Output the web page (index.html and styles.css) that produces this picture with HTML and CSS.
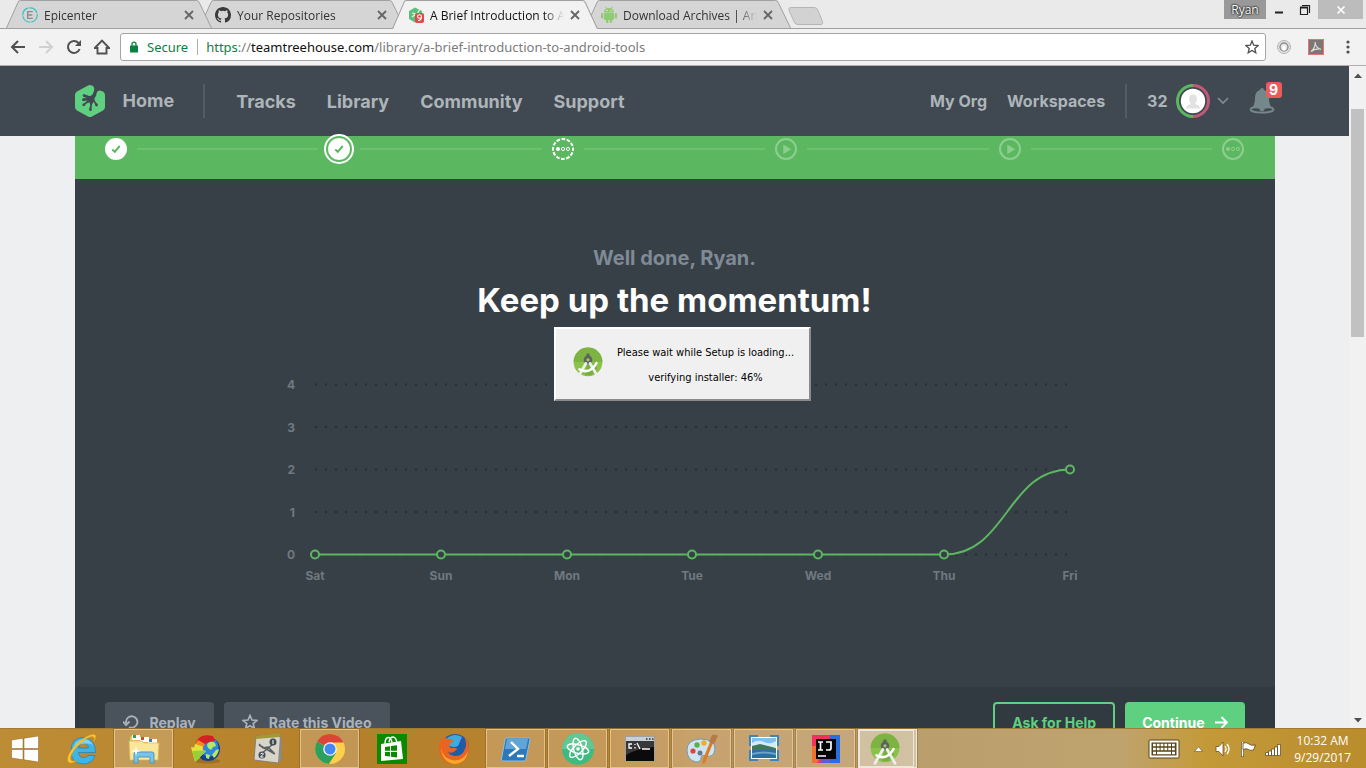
FILE: index.html
```html
<!DOCTYPE html>
<html lang="en">
<head>
<meta charset="utf-8">
<title>A Brief Introduction to Android Tools</title>
<link rel="stylesheet" href="styles.css">
</head>
<body>
<svg class="defs" aria-hidden="true">
  <symbol id="tabshape" viewBox="0 0 207 28" preserveAspectRatio="none">
    <path d="M0.500 28 L12 2.500 Q12.700 .5 14.500 .5 H191.500 Q193.300 .5 194.200 2.500 L206.500 28" stroke="#a0a0a0"/>
  </symbol>
  <symbol id="close" viewBox="0 0 10 10"><path d="M1 1 L9 9 M9 1 L1 9" fill="none" stroke="currentColor" stroke-width="1.800"/></symbol>
  <symbol id="studio" viewBox="0 0 30 30">
    <circle cx="15" cy="14" r="13.500" fill="#8bc34a"/>
    <path d="M1.500 14a13.500 13.500 0 0 1 27 0z" fill="#7cb342"/>
    <path d="M15 11 L24 20 L18 26.500 H12z" fill="#558b2f" opacity=".35"/>
    <rect x="13.500" y="6" width="3" height="5" rx="1" fill="#616161"/>
    <circle cx="15" cy="12" r="4" fill="#616161"/><circle cx="15" cy="12" r="1.500" fill="#9ccc65"/>
    <path d="M13 15.500 L5.500 28.500 M17 15.500 L24.500 28.500" stroke="#eee" stroke-width="2.600" stroke-linecap="round"/>
    <path d="M7 21 Q17 26 23 15" fill="none" stroke="#fff" stroke-width="2.400" stroke-linecap="round"/>
  </symbol>
</svg>

<header class="chrome">
  <div class="tabstrip">
    <div class="tabs">
      <div class="tab tab-first">
        <svg class="tab-bg"><use href="#tabshape"/></svg>
        <svg class="favicon" viewBox="0 0 16 16"><circle cx="8" cy="8" r="7.200" fill="none" stroke="#3fc1c9" stroke-width="1.300" stroke-dasharray="10 1"/><path d="M10.800 4.600H5.700v6.800h5.100M5.700 8h4.600" fill="none" stroke="#8c8c8c" stroke-width="1.400"/></svg>
        <span class="tab-title">Epicenter</span>
        <button class="tab-close" aria-label="Close tab"><svg viewBox="0 0 10 10"><use href="#close"/></svg></button>
      </div>
      <div class="tab tab-second">
        <svg class="tab-bg"><use href="#tabshape"/></svg>
        <svg class="favicon" viewBox="0 0 16 16"><path fill="#3a3a3a" fill-rule="evenodd" d="M8 0C3.580 0 0 3.580 0 8c0 3.540 2.290 6.530 5.470 7.590.4.070.55-.17.55-.38 0-.19-.01-.82-.01-1.490-2.010.37-2.530-.49-2.690-.94-.09-.23-.48-.94-.82-1.130-.28-.15-.68-.52-.01-.53.63-.01 1.080.58 1.230.82.72 1.210 1.870.87 2.330.66.07-.52.28-.87.51-1.070-1.780-.2-3.640-.89-3.640-3.950 0-.87.31-1.590.82-2.150-.08-.2-.36-1.020.08-2.120 0 0 .67-.21 2.200.82a7.600 7.600 0 0 1 4 0c1.530-1.040 2.200-.82 2.200-.82.44 1.100.16 1.920.08 2.120.51.56.82 1.270.82 2.150 0 3.070-1.870 3.750-3.650 3.950.29.25.54.73.54 1.480 0 1.070-.01 1.930-.01 2.200 0 .21.15.46.55.38A8 8 0 0 0 16 8c0-4.420-3.580-8-8-8z"/></svg>
        <span class="tab-title">Your Repositories</span>
        <button class="tab-close" aria-label="Close tab"><svg viewBox="0 0 10 10"><use href="#close"/></svg></button>
      </div>
      <div class="tab tab-active">
        <svg class="tab-bg"><use href="#tabshape"/></svg>
        <svg class="favicon" viewBox="0 0 16 16"><path d="M7 .5 L14 4 V12 L7 15.500 L1 12 V4z" fill="#57c17b"/><path d="M4 6l5 1 3-5M4 10l4-3" stroke="#f2f2f2" stroke-width="1.200" fill="none"/><rect x="7" y="6" width="9" height="10" rx="2" fill="#e0484a"/><path d="M13.500 9.500a2 1.800 0 1 0-4 0 2 1.800 0 1 0 4 0q0 4-3.500 4" fill="none" stroke="#fff" stroke-width="1.100"/></svg>
        <span class="tab-title">A Brief Introduction to Android Tools</span>
        <button class="tab-close" aria-label="Close tab"><svg viewBox="0 0 10 10"><use href="#close"/></svg></button>
      </div>
      <div class="tab tab-last">
        <svg class="tab-bg"><use href="#tabshape"/></svg>
        <svg class="favicon" viewBox="0 0 16 16"><g fill="#8fcb72"><path d="M3 5.500a5 4.500 0 0 1 10 0z"/><rect x="3" y="6" width="10" height="7" rx="1"/><rect x="0" y="6" width="2.300" height="5.500" rx="1.100"/><rect x="13.700" y="6" width="2.300" height="5.500" rx="1.100"/><rect x="5" y="12" width="2.300" height="4" rx="1"/><rect x="8.700" y="12" width="2.300" height="4" rx="1"/></g><path d="M4.500 0l1.500 2M11.500 0L10 2" stroke="#8fcb72"/><path d="M5.500 3.500h1M9.500 3.500h1" stroke="#fff"/></svg>
        <span class="tab-title">Download Archives | Android Studio</span>
        <button class="tab-close" aria-label="Close tab"><svg viewBox="0 0 10 10"><use href="#close"/></svg></button>
      </div>
      <button class="new-tab" aria-label="New tab"><svg viewBox="0 0 36 18"><path d="M3 .5H26Q28.500 .5 29.500 2.500L34.500 14.500Q35.500 17.500 33 17.500H10Q7.500 17.500 6.500 15.500L1 3.500Q0 .5 3 .5z" fill="#d2d2d2" stroke="#b5b5b5"/></svg></button>
    </div>
    <div class="window-controls">
      <button class="profile">Ryan</button>
      <button class="win-button" aria-label="Minimize"><svg viewBox="0 0 12 12"><path d="M2 8.500h8" stroke="#222" stroke-width="2"/></svg></button>
      <button class="win-button" aria-label="Restore"><svg viewBox="0 0 12 12"><path d="M1 3.500h7.500v7H1.500v-7M3 1.500h7.500V9" fill="none" stroke="#222" stroke-width="1.200"/><path d="M1 3.500h8" stroke="#222" stroke-width="2"/></svg></button>
      <button class="win-button win-close" aria-label="Close"><svg viewBox="0 0 12 12"><path d="M2.500 2.500l7 7M9.500 2.500l-7 7" stroke="#fff" stroke-width="1.700"/></svg></button>
    </div>
  </div>
  <div class="toolbar">
    <button class="tool" aria-label="Back"><svg viewBox="0 0 16 16"><path d="M15 8H2.500M8 2L2 8l6 6" fill="none" stroke="#505050" stroke-width="2"/></svg></button>
    <button class="tool" aria-label="Forward"><svg viewBox="0 0 16 16"><path d="M1 8h12.500M8 2l6 6-6 6" fill="none" stroke="#d0d0d0" stroke-width="2"/></svg></button>
    <button class="tool" aria-label="Reload"><svg viewBox="0 0 16 16"><path d="M13.600 10A6 6 0 1 1 12.500 4" fill="none" stroke="#505050" stroke-width="2"/><path d="M15 1v6H9z" fill="#505050"/></svg></button>
    <button class="tool" aria-label="Home"><svg viewBox="0 0 16 16"><path d="M.8 9L8 1.500 15.200 9H12.500V14.500H3.500V9z" fill="none" stroke="#505050" stroke-width="1.900"/></svg></button>
    <div class="omnibox">
      <svg class="lock" viewBox="0 0 8 12"><rect y="4.500" width="8" height="7" rx=".6" fill="#0b8043"/><path d="M2 5V3.200a2 2 0 0 1 4 0V5" fill="none" stroke="#0b8043" stroke-width="1.300"/></svg>
      <span class="secure">Secure</span>
      <div class="url" contenteditable="true" role="textbox" aria-label="Address"><span class="scheme">https</span>://<span class="host">teamtreehouse.com</span>/library/a-brief-introduction-to-android-tools</div>
      <button class="bookmark" aria-label="Bookmark"><svg viewBox="0 0 14 14"><path d="M7 1l1.700 4.200 4.500.3-3.400 2.900 1 4.400L7 10.400l-3.800 2.400 1-4.400L.8 5.500l4.500-.3z" fill="none" stroke="#505050" stroke-width="1.300"/></svg></button>
    </div>
    <button class="extension" aria-label="Extension"><svg viewBox="0 0 16 16"><circle cx="8" cy="8" r="6.500" fill="#e6e6e6" stroke="#b3b3b3"/><circle cx="8" cy="8" r="4" fill="none" stroke="#8f8f8f" stroke-width="1.500"/><path d="M6.500 8a1.500 1.500 0 0 1 3 0v3.500h-3z" fill="#fff"/></svg></button>
    <button class="extension" aria-label="Adobe Acrobat"><svg viewBox="0 0 16 16"><rect x=".5" y=".5" width="15" height="15" fill="#7d7676" stroke="#e5756c"/><path d="M3 12.500Q7.500 9 7.200 3M7.200 4Q8 9 13 10.500M3 12.500Q7 9 13 10" fill="none" stroke="#ddd" stroke-width="1.200"/></svg></button>
    <button class="menu" aria-label="Menu"><svg viewBox="0 0 4 14"><circle cx="2" cy="2" r="1.600"/><circle cx="2" cy="7" r="1.600"/><circle cx="2" cy="12" r="1.600"/></svg></button>
  </div>
</header>

<div class="viewport">
  <div class="page">
    <nav class="sitenav">
      <div class="sitenav-inner">
        <a class="logo" href="#" aria-label="Treehouse"><svg viewBox="0 0 30 32"><path d="M13 .6Q15 -.5 17 .6L18.500 1.500Q19.800 3.500 18.800 6.500L17.500 9.500Q16 11.500 13.500 10.800L9.500 9.300Q7.500 9 7.700 10.500 8 12 9.500 12.300L12 13 8.500 13.200Q6.700 13.500 7 15 7.500 16.500 9 16L12.500 15.500 9.500 18Q7 18.500 7.300 20.300 8.300 22 9.800 20.800L11 18.800 14.500 17.200 15.300 20.500Q14.500 23.500 14 24 14.200 26.500 15.800 26 17.400 25.500 16.500 23.500L17 19.500 18.500 16.800 20 19Q20 21.500 21.500 21.500 23.600 21 22.700 19.300L20.500 17 19.500 14.500Q19.500 12.500 21.300 10.500 21 8 22.500 6.500 24 4.800 26.500 6L28 6.600Q30 7.800 30 10V22Q30 24.300 28 25.400L17 31.400Q15 32.500 13 31.400L2 25.400Q0 24.300 0 22V10Q0 7.800 2 6.600z" fill="#5fcf80"/></svg></a>
        <a class="primary home" href="#">Home</a>
        <a class="primary" href="#">Tracks</a>
        <a class="primary" href="#">Library</a>
        <a class="primary" href="#">Community</a>
        <a class="primary" href="#">Support</a>
        <div class="account">
          <a class="secondary" href="#">My Org</a>
          <a class="secondary" href="#">Workspaces</a>
          <a class="points" href="#">32</a>
          <button class="avatar" aria-label="Profile menu"><svg class="ring" viewBox="0 0 34 34"><path d="M17 1.500a15.500 15.500 0 0 0 0 31" fill="none" stroke="#5cb860" stroke-width="3"/><path d="M17 1.500a15.500 15.500 0 0 1 0 31" fill="none" stroke="#c25975" stroke-width="3"/><circle cx="17" cy="17" r="12.200" fill="#fff"/><path d="M10 24.500q0-3.500 5-4.500-2-2-2-5.500 0-4 4-4t4 4q0 3.500-2 5.500 5 1 5 4.500z" fill="#e2e2e2"/></svg><svg class="chevron" viewBox="0 0 12 8"><path d="M1 1l5 5 5-5" fill="none" stroke="#7f8c95" stroke-width="1.700"/></svg></button>
          <button class="bell" aria-label="Notifications"><svg viewBox="0 0 26 26"><path d="M13 0q1.800 0 2 2 5 1.500 5 8 0 7 3 10H3q3-3 3-10 0-6.500 5-8 .2-2 2-2z" fill="#75878a"/><ellipse cx="13" cy="21.500" rx="11.500" ry="3" fill="#404851" stroke="#75878a" stroke-width="1.800"/><path d="M6 15h14l2 5q-9 1.500-18 0z" fill="#75878a"/><circle cx="13" cy="20.500" r="2.600" fill="#75878a"/></svg><span class="badge">9</span></button>
        </div>
      </div>
    </nav>

    <main class="stage">
      <div class="steps">
        <svg class="step" viewBox="0 0 22 22"><circle cx="11" cy="11" r="11" fill="#fff"/><path d="M7.300 11.500l2.500 2.300L14.700 8" fill="none" stroke="#5cb860" stroke-width="2"/></svg>
        <span class="link"></span>
        <svg class="step step-current" viewBox="0 0 22 22"><circle cx="11" cy="11" r="11" fill="#fff"/><path d="M7.300 11.500l2.500 2.300L14.700 8" fill="none" stroke="#5cb860" stroke-width="2"/></svg>
        <span class="link"></span>
        <svg class="step" viewBox="0 0 22 22"><circle cx="11" cy="11" r="10" fill="none" stroke="#fff" stroke-width="2" stroke-dasharray="3.700 1.536" stroke-dashoffset="1.850"/><circle cx="6" cy="11" r="2" fill="#fff"/><g fill="none" stroke="#fff"><circle cx="11" cy="11" r="1.600"/><circle cx="16" cy="11" r="1.600"/></g></svg>
        <span class="link"></span>
        <svg class="step step-future" viewBox="0 0 22 22"><circle cx="11" cy="11" r="10" fill="none" stroke="#fff" stroke-width="2"/><path d="M8.300 6.500v9.500l8-4.700z" fill="#fff"/></svg>
        <span class="link"></span>
        <svg class="step step-future" viewBox="0 0 22 22"><circle cx="11" cy="11" r="10" fill="none" stroke="#fff" stroke-width="2"/><path d="M8.300 6.500v9.500l8-4.700z" fill="#fff"/></svg>
        <span class="link"></span>
        <svg class="step step-future" viewBox="0 0 22 22"><circle cx="11" cy="11" r="10" fill="none" stroke="#fff" stroke-width="2"/><circle cx="6" cy="11" r="2" fill="#fff"/><g fill="none" stroke="#fff"><circle cx="11" cy="11" r="1.600"/><circle cx="16" cy="11" r="1.600"/></g></svg>
      </div>
      <section class="summary">
        <p class="praise">Well done, Ryan.</p>
        <h1 class="headline">Keep up the momentum!</h1>
        <svg class="chart" viewBox="0 0 820 210" role="img" aria-label="Videos and challenges completed per day">
          <g class="grid"><path d="M50 9.500H807M50 52H807M50 94.500H807M50 137H807M50 179.500H807"/></g>
          <g class="axis ticks"><text x="30" y="14">4</text><text x="30" y="57">3</text><text x="30" y="99">2</text><text x="30" y="142">1</text><text x="30" y="184">0</text></g>
          <path class="curve" d="M50 179.500H679C742 179.500 742 94.500 805 94.500"/>
          <g class="points-done"><circle cx="50" cy="179.500" r="4"/><circle cx="176" cy="179.500" r="4"/><circle cx="302" cy="179.500" r="4"/><circle cx="427" cy="179.500" r="4"/><circle cx="553" cy="179.500" r="4"/><circle cx="679" cy="179.500" r="4"/><circle cx="805" cy="94.500" r="4"/></g>
          <g class="axis days"><text x="50" y="205">Sat</text><text x="176" y="205">Sun</text><text x="302" y="205">Mon</text><text x="427" y="205">Tue</text><text x="553" y="205">Wed</text><text x="679" y="205">Thu</text><text x="805" y="205">Fri</text></g>
        </svg>
      </section>
      <footer class="actions">
        <button class="btn btn-muted"><svg class="btn-icon" viewBox="0 0 16 16"><path d="M3 9.500V8a5.700 5.700 0 1 1 3 5" fill="none" stroke="#a9b2bb" stroke-width="1.900"/><path d="M0 7.500l3 3.500 3.500-3.500" fill="none" stroke="#a9b2bb" stroke-width="1.900"/></svg>Replay</button>
        <button class="btn btn-muted"><svg class="btn-icon" viewBox="0 0 16 16"><path d="M8 1.500l2 4.500 5 .4-3.800 3.200 1.200 4.800L8 11.700l-4.400 2.700 1.200-4.800L1 6.400 6 6z" fill="none" stroke="#a9b2bb" stroke-width="1.700"/></svg>Rate this Video</button>
        <button class="btn btn-outline">Ask for Help</button>
        <button class="btn btn-solid">Continue<svg class="btn-arrow" viewBox="0 0 13 13"><path d="M0 6.500h11M6.500 1l5.300 5.500L6.500 12" fill="none" stroke="#fff" stroke-width="2"/></svg></button>
      </footer>
    </main>
  </div>
  <div class="scrollbar" aria-hidden="true">
    <svg viewBox="0 0 8 5"><path d="M0 5l4-4.500L8 5z"/></svg>
    <span class="thumb"></span>
    <svg viewBox="0 0 8 5"><path d="M0 0l4 4.500L8 0z"/></svg>
  </div>
  <div class="dialog" role="dialog" aria-label="Setup">
    <svg class="dialog-icon" viewBox="0 0 30 30"><use href="#studio"/></svg>
    <div class="dialog-text"><p>Please wait while Setup is loading...</p><p>verifying installer: 46%</p></div>
  </div>
</div>

<footer class="taskbar">
  <button class="start" aria-label="Start"><svg viewBox="0 0 28 26"><g fill="#fff" stroke="#8e6120" stroke-width=".5"><path d="M.5 4L12 2.300V12.500H.5zM13 2.200L27.500 0V12.500H13zM.5 13.500H12V23.700L.5 22zM13 13.500H27.500V26L13 23.800z"/></g></svg></button>
  <div class="apps">
    <button class="app" aria-label="Internet Explorer"><svg viewBox="0 0 32 32"><path fill-rule="evenodd" d="M17 4.500Q29.500 5.500 29.500 19.500H12.500Q13 24.500 17.500 24.500 21 24.500 22 22.500H29Q26.500 31 17 31 5 30.500 5 18 5 5 17 4.500zM12.500 15H22.500Q22 10.500 17.500 10.500T12.500 15z" fill="#3fb4e8" stroke="#1d7fc0" stroke-width=".7"/><path d="M7 15Q9 7 17 6q7 0 10 6-8-4-20 3z" fill="#9be2fb" opacity=".7"/><path d="M27.500 9Q33 .5 26 1.500C16 3.500-1 20 2 28.500Q4 32 11 27.500 4 29.500 4.500 25C6 16.500 19 4.500 26 3.500Q29.500 3.500 27.500 9z" fill="#fcc730" stroke="#dc9a15" stroke-width=".5"/></svg></button>
    <button class="app app-open" aria-label="File Explorer"><svg viewBox="0 0 32 32"><path d="M2 5q0-2 2-2h7l2 3h16v20H2z" fill="#e6c463"/><path d="M4 2h8v5H4zM12 4h9v5h-9zM20 6h9v5h-9z" fill="#fff"/><path d="M5 2h3v3H5z" fill="#27a844"/><path d="M13 4h3v3h-3z" fill="#d5473e"/><path d="M21 6h3v3h-3z" fill="#2f7fd6"/><path d="M1 8h13l2 2h15l-1 17H2z" fill="#fae69b" stroke="#d9b650" stroke-width=".7"/><path d="M6 30V21q0-2 2-2h16q2 0 2 2v9h-4v-6H10v6z" fill="#79c3e5" stroke="#4a98c5"/><path d="M8 13l1 4 4 1-4 1-1 4-1-4-4-1 4-1z" fill="#fff"/></svg></button>
    <button class="app" aria-label="Download Manager"><svg viewBox="0 0 32 32"><ellipse cx="17" cy="28" rx="13" ry="2.500" fill="#70521c" opacity=".4"/><circle cx="18" cy="16" r="12" fill="#123f94"/><circle cx="19" cy="14" r="9.500" fill="#2f86dd"/><path d="M18 10q4-3 7 0l1 3-3 1-2 3-3-2-1-3zM26 17l3-1q-1 6-5 9l-2-3zM16 21l4 1-1 4-3-1z" fill="#b5e860"/><path d="M23 3Q7-1 4 15L13 17Q12 9 25 8z" fill="#d91f26"/><path d="M8 7Q5 10 4 15L13 17Q13 13 15 11z" fill="#f58a22"/><path d="M4 14.500L1 14 5 29 16 18 12.800 17Q12.500 15 13 13.500L5 11z" fill="#e4e23c"/><path d="M2.500 18L5 29 16 18 12 17.500z" fill="#97cf38"/></svg></button>
    <button class="app" aria-label="Maps and Notes"><svg viewBox="0 0 32 32"><path d="M4 3L28 1l2 25-4 4-24-3z" fill="#d8d4c8" stroke="#777" stroke-width=".8"/><path d="M4 3L28 0v4L4 6z" fill="#a29836"/><path d="M26 30l4-4V6l-2-3z" fill="#8d897e"/><path d="M7 12l16 9M9 21l12-10M7 11l4 4 5-1 6 6" fill="none" stroke="#555e62" stroke-width="1.500"/><circle cx="21" cy="9" r="3.500" fill="#3e4a55"/><circle cx="10" cy="22" r="3.500" fill="#3e4a55"/><path d="M21 7v4M8.500 21l2-1 1 1-3 3h3" stroke="#fff" fill="none"/></svg></button>
    <button class="app app-open" aria-label="Google Chrome"><svg viewBox="0 0 32 32"><circle cx="16" cy="16" r="15" fill="#fcd04b"/><path d="M16 16L3 8.500A15 15 0 0 1 29.500 9.500H16z" fill="#db4437"/><path d="M16 16L3 8.500a15 15 0 0 0 11.800 22.400L22 20z" fill="#2ba15d"/><circle cx="16" cy="16" r="6.800" fill="#f4f4f4"/><circle cx="16" cy="16" r="5.500" fill="#4688f1"/></svg></button>
    <button class="app" aria-label="Store"><svg viewBox="0 0 32 32"><path d="M1 1h30v30H1z" fill="#0a8a00"/><path d="M5 11l20-3 2 18-22 2z" fill="#fff"/><path d="M9 11Q9 5 12 4.500t4 5M13 9q1-5 4-5t4 6" fill="none" stroke="#fff" stroke-width="1.400"/><path d="M9 14l5-.7v4.500H9zM15 13l6-.8v5.600h-6zM9 19h5v4.500L9 23zM15 19h6v5.500l-6-.8z" fill="#0a8a00"/></svg></button>
    <button class="app" aria-label="Firefox"><svg viewBox="0 0 32 32"><circle cx="17" cy="15" r="14" fill="#1f5ca8"/><path d="M8 6Q16-1 24 4L20 13Q14 16 9 11z" fill="#3fa9e0"/><path d="M4 4Q-1 14 2 22t14 9.500q13-.5 15-14Q31.500 9 26.500 5q3 6 .5 11-2 6.500-9 7-6 0-8-4 4 2 7-1l2.500-2q-2-1.500-5-1-3 0-3-2 0-3 4-4.500 0-2.500-4-2.500Q7 6.500 7.500 3.500 5 5 4.500 8z" fill="#ea6420"/><path d="M3 15q2 11 13 12.500 10 0 14-9-2 12-14 12.500Q4 29 3 15" fill="#f6a928"/></svg></button>
    <button class="app app-open" aria-label="PowerShell"><svg viewBox="0 0 32 32"><path d="M6 5h23q1.500 0 1 1.500L26 26q-.5 2-2 2H3q-2 0-1.500-2L5 7q.3-2 1-2z" fill="#2d78b8" stroke="#8ebfe0"/><path d="M7 6h21l-2 10H5z" fill="#60a5d6"/><path d="M11 9l7 7-9 7M17 23h7" fill="none" stroke="#fff" stroke-width="2.400"/></svg></button>
    <button class="app app-open" aria-label="Atom"><svg viewBox="0 0 32 32"><circle cx="16" cy="16" r="16" fill="#3fbb82"/><path d="M0 16a16 16 0 0 1 32 0z" fill="#63c794"/><g fill="none" stroke="#fff" stroke-width="1.400"><ellipse cx="16" cy="16" rx="11" ry="4.300" transform="rotate(15 16 16)"/><ellipse cx="16" cy="16" rx="11" ry="4.300" transform="rotate(75 16 16)"/><ellipse cx="16" cy="16" rx="11" ry="4.300" transform="rotate(135 16 16)"/></g><circle cx="16" cy="16" r="1.800" fill="#fff"/></svg></button>
    <button class="app app-open" aria-label="Command Prompt"><svg viewBox="0 0 32 32"><path d="M1.500 3.500h29v25h-29z" fill="#0b0b0b" stroke="#9ca2a6"/><path d="M2 4h28v4H2z" fill="#c8d0d7"/><path d="M22 6h1.500M25 6h1.500M28 6h1.500" stroke="#555" stroke-width="2"/><path d="M2 8h28v6Q14 15 2 22z" fill="#383838"/><path d="M8 11H5v4h3M11 11v1M11 14v1.500M13 10l3 6M18 16h8" fill="none" stroke="#fff" stroke-width="1.300"/></svg></button>
    <button class="app app-open" aria-label="Paint"><svg viewBox="0 0 32 32"><path d="M14 6Q1 7 1 17T10 29q5 0 5-4 0-4 5-2 8 2 9-7Q29 6 14 6z" fill="#cfe4ef" stroke="#6d9db9"/><circle cx="7" cy="18" r="2.600" fill="#dc433d"/><circle cx="11" cy="12" r="2.700" fill="#55b348"/><circle cx="18" cy="10" r="2.700" fill="#f3ad2c"/><circle cx="14" cy="20" r="2.500" fill="#637989"/><path d="M27 10l-8 20-3 1 1-5 7-17z" fill="#dc7d28"/><path d="M23 9l3-7q4-1 6 1l-4 8z" fill="#b57b48"/></svg></button>
    <button class="app app-open" aria-label="Photo Viewer"><svg viewBox="0 0 32 32"><path d="M1 2h9v6H7v5H1zM31 2h-9v6h3v5h6zM1 28h9v-6H7v-5H1zM31 28h-9v-6h3v-5h6z" fill="#3c86bf"/><path d="M3 4h26v22H3z" fill="#fff"/><path d="M4 5h24v9H4z" fill="#7fc0ee"/><path d="M4 10q6-4 12-1t12-1v6H4z" fill="#d5ecf8"/><path d="M4 13l8-2 16 4v3H4z" fill="#3e7862"/><path d="M4 17h24v8H4z" fill="#2f6f9c"/><path d="M4 20q12-3 24 0v2q-12-3-24 0z" fill="#6aa5c4"/></svg></button>
    <button class="app app-open" aria-label="IntelliJ IDEA"><svg viewBox="0 0 32 32"><path d="M2 2h28v28H2z" fill="#5c5ae0"/><path d="M2 2h22L10 30H2z" fill="#f3305f"/><path d="M2 13h9v9l-4 8H2z" fill="#ec742f"/><path d="M20 2h10v28H20z" fill="#276fe0"/><path d="M6 6h20v20H6z" fill="#050505"/><path d="M8 9h5M10.500 9v8M8 17h5M16 9h5v6q0 2-2 2h-3M8 23h8" fill="none" stroke="#fff" stroke-width="1.700"/></svg></button>
    <button class="app app-open app-focus" aria-label="Android Studio Setup"><svg viewBox="0 0 30 30"><use href="#studio"/></svg></button>
  </div>
  <div class="tray">
    <button class="tray-item" aria-label="Touch keyboard"><svg class="keyboard" viewBox="0 0 32 20"><rect x="1" y="1" width="30" height="18" rx="1" fill="#fff" stroke="#5b4317"/><rect x="3.500" y="3.500" width="25" height="13" fill="#5b4317"/><path d="M5 6h22M5 10h22" stroke="#fff" stroke-width="2.600" stroke-dasharray="2.800 1"/><path d="M5 14h3M9 14h14M24 14h3" stroke="#fff" stroke-width="2.400"/></svg></button>
    <button class="tray-item" aria-label="Show hidden icons"><svg class="caret" viewBox="0 0 9 6"><path d="M.5 5.500L4.500 .8l4 4.700z" fill="#fff" stroke="#6f5428" stroke-width=".6"/></svg></button>
    <button class="tray-item" aria-label="Volume"><svg viewBox="0 0 16 16"><path d="M1 5.500h3L8 1v14l-4-4.500H1z" fill="#fff" stroke="#5b4317" stroke-width=".7"/><path d="M10 5q2 3 0 6M12 3q4 5 0 10" fill="none" stroke="#fff" stroke-width="1.300"/></svg></button>
    <button class="tray-item" aria-label="Action center"><svg viewBox="0 0 16 16"><path d="M2.500 1v15" stroke="#5b4317" stroke-width="3"/><path d="M2.500 1v14.500" stroke="#fff" stroke-width="1.600"/><path d="M3 2q4-1 6 1t6.500 1l-2 5q-3 1-5-.5T3 8.500z" fill="#fff" stroke="#5b4317" stroke-width=".8"/></svg></button>
    <button class="tray-item" aria-label="Network"><svg viewBox="0 0 16 16"><g fill="#fff" stroke="#5b4317" stroke-width=".7"><path d="M.5 11.500h3v3h-3zM3.500 10h3v4.500h-3zM6.500 8h3v6.500h-3zM9.500 6h3v8.500h-3zM12.500 3.500h3v11h-3z"/></g></svg></button>
    <button class="clock"><span>10:32 AM</span><span>9/29/2017</span></button>
  </div>
</footer>
</body>
</html>
```

FILE: styles.css
```css
* { box-sizing: border-box; }

body {
  margin: 0;
  height: 100vh;
  display: flex;
  flex-direction: column;
  overflow: hidden;
  font-family: "Open Sans", "Noto Sans", sans-serif;
  font-size: 12px;
}

button {
  margin: 0;
  padding: 0;
  border: 0;
  background: none;
  font: inherit;
  color: inherit;
}

a { color: inherit; text-decoration: none; }
svg { display: block; flex: none; }
.defs { position: absolute; width: 0; height: 0; }

/* Browser window */
.chrome { flex: none; background: #f2f2f2; }

.tabstrip {
  height: 29px;
  display: flex;
  justify-content: space-between;
  background: #eaeaea;
  border-bottom: 1px solid #a0a0a0;
}

.tabs { display: flex; padding-left: 6px; }

.tab {
  position: relative;
  width: 206px;
  height: 29px;
  margin-right: -13px;
  padding: 1px 18px 0 16px;
  display: flex;
  align-items: center;
  color: #333;
}

.tab-first { z-index: 4; }
.tab-second { z-index: 3; }
.tab-active { z-index: 5; color: #111; }
.tab-last { z-index: 2; }

.tab-bg {
  position: absolute;
  inset: 0;
  width: 100%;
  height: 28px;
  fill: #d5d5d5;
}

.tab-active .tab-bg { fill: #f2f2f2; height: 29px; }
.favicon { position: relative; width: 16px; height: 16px; }

.tab-title {
  position: relative;
  flex: 1;
  min-width: 0;
  margin: 0 6px;
  overflow: hidden;
  white-space: nowrap;
  mask-image: linear-gradient(90deg, #000 85%, transparent);
}

.tab-close { position: relative; width: 10px; height: 10px; color: #666; }
.new-tab { margin: 7px 0 0 10px; width: 36px; height: 18px; align-self: flex-start; }
.new-tab svg { width: 36px; height: 18px; }

.window-controls { display: flex; height: 19px; padding-right: 3px; align-self: flex-start; }

.profile {
  width: 42px;
  background: #999;
  color: #fff;
  text-shadow: 0 0 2px #000, 0 0 2px #000;
}

.win-button { width: 26px; display: flex; align-items: center; justify-content: center; }
.win-button svg { width: 12px; height: 12px; }
.win-close { width: 45px; background: #bcbcbc; }

.toolbar {
  height: 37px;
  display: flex;
  align-items: center;
  padding: 0 16px 0 10px;
  gap: 12px;
  border-bottom: 1px solid #b0b0b0;
}

.tool, .tool svg, .extension, .extension svg { width: 16px; height: 16px; }
.extension { margin-left: 4px; }
.menu { margin-left: 10px; }
.menu svg { width: 4px; height: 14px; fill: #505050; }

.omnibox {
  flex: 1;
  height: 28px;
  margin: 0 -6px 0 -2px;
  padding: 0 6px 0 9px;
  display: flex;
  align-items: center;
  background: #fff;
  border: 1px solid #a5a5a5;
  border-radius: 3px;
  font: 13px "Noto Sans", "Open Sans", sans-serif;
}

.lock { width: 8px; height: 12px; }

.secure {
  margin: 0 8px 0 9px;
  padding-right: 9px;
  line-height: 16px;
  color: #0b8043;
  border-right: 1px solid #b0b0b0;
}

.url { flex: 1; color: #7c7c7c; white-space: nowrap; }
.scheme { color: #0b8043; }
.host { color: #111; }
.bookmark svg { width: 14px; height: 14px; }

/* Web page */
.viewport {
  position: relative;
  flex: 1;
  min-height: 0;
  display: flex;
  overflow: hidden;
  font-family: Inter, "Open Sans", sans-serif;
}

.page {
  flex: 1;
  min-width: 0;
  display: flex;
  flex-direction: column;
  background: #edeff0;
}

.sitenav { height: 70px; flex: none; background: #404851; }

.sitenav-inner {
  max-width: 1200px;
  height: 70px;
  margin: 0 auto;
  display: flex;
  align-items: center;
  color: #adb5b9;
  font-weight: 700;
  font-size: 18px;
}

.logo svg { width: 30px; height: 32px; }
.primary { margin-right: 31px; }

.home {
  margin-left: 18px;
  padding-right: 29px;
  line-height: 34px;
  border-right: 2px solid #535b64;
}

.account { margin-left: auto; display: flex; align-items: center; font-size: 16px; }
.secondary { margin-right: 20px; }

.points {
  padding-left: 20px;
  line-height: 34px;
  border-left: 2px solid #535b64;
}

.avatar { margin: 0 20px 0 8px; display: flex; align-items: center; gap: 7px; }
.ring { width: 34px; height: 34px; }
.chevron { width: 12px; height: 8px; }
.bell { position: relative; }
.bell svg { width: 26px; height: 26px; }

.badge {
  position: absolute;
  top: -6px;
  right: -7px;
  width: 16px;
  height: 16px;
  border-radius: 3px;
  background: #ed5a5a;
  color: #fff;
  font-size: 14px;
  line-height: 16px;
  font-weight: 700;
}

.stage {
  flex: 1;
  width: 100%;
  max-width: 1200px;
  margin: 0 auto;
  display: flex;
  flex-direction: column;
  background: #384047;
}

.steps {
  height: 43px;
  flex: none;
  padding: 2px 30px 0;
  display: flex;
  align-items: flex-start;
  background: #5cb860;
}

.step { width: 22px; height: 22px; }
.step-current { border-radius: 50%; box-shadow: 0 0 0 2px #5cb860, 0 0 0 4px #fff; }
.step-future { opacity: .3; }
.link { flex: 1; height: 2px; margin: 10px 10px 0; background: #6cc070; }

.summary { flex: none; height: 508px; padding-top: 66px; text-align: center; }
.praise, .headline { margin: 0; font-weight: 700; }
.praise { font-size: 20px; line-height: 26px; color: #7f8a96; }
.headline { margin-top: 8px; font-size: 33px; line-height: 42px; color: #fff; }
.chart { width: 100%; max-width: 820px; margin: 54px auto 0; overflow: visible; }

.grid { stroke: #262d34; stroke-width: 2; stroke-dasharray: 2 8; }
.axis { fill: #6f7982; font-size: 12px; font-weight: 700; }
.ticks { text-anchor: end; }
.days { text-anchor: middle; }
.curve { fill: none; stroke: #5cb860; stroke-width: 2; }
.points-done { fill: #384047; stroke: #5cb860; stroke-width: 2; }

.actions {
  flex: none;
  padding: 15px 30px;
  display: flex;
  gap: 10px;
  background: #323a41;
}

.btn {
  height: 40px;
  padding: 0 17px;
  display: flex;
  align-items: center;
  gap: 10px;
  border-radius: 4px;
  font-size: 14px;
  font-weight: 700;
  white-space: nowrap;
}

.btn-icon { width: 16px; height: 16px; }
.btn-arrow { width: 13px; height: 13px; }
.btn-muted { padding: 0 18px; gap: 11px; background: #4a525c; color: #a9b2bb; }
.btn-outline { margin-left: auto; border: 2px solid #5fcf80; color: #5fcf80; }
.btn-solid { background: #5fcf80; color: #fff; }

.scrollbar {
  width: 17px;
  flex: none;
  padding: 7px 0 5px;
  display: flex;
  flex-direction: column;
  align-items: center;
  justify-content: space-between;
  background: #f1f1f1;
}

.scrollbar svg { width: 8px; height: 5px; fill: #505050; }
.thumb { width: 13px; height: 228px; margin: 31px 0 auto; background: #c1c1c1; }

/* Installer window, centred over the work area */
.dialog {
  position: absolute;
  top: 50%;
  left: 50%;
  width: 257px;
  height: 74px;
  margin: -70px 0 0 -129px;
  padding: 2px 14px 0 16px;
  display: flex;
  align-items: center;
  background: #f0f0f0;
  border: 2px solid;
  border-color: #fff #8a8a8a #8a8a8a #fff;
  color: #000;
  font: 11px "DejaVu Sans Condensed", "DejaVu Sans", sans-serif;
}

.dialog-icon { width: 32px; height: 32px; margin-bottom: 4px; }
.dialog-text { flex: 1; text-align: center; white-space: nowrap; }
.dialog-text p { margin: 0 0 0 12px; line-height: 25px; }

/* Desktop taskbar */
.taskbar {
  height: 40px;
  flex: none;
  display: flex;
  align-items: center;
  background: linear-gradient(90deg, #bd8d35, #b5802a 25%, #b98431 45%, #bd9356 52%, #b99d6c 65%, #bfa36f 82%, #c49a39 88%, #b98c2c);
  border-top: 1px solid #a27b32;
}

.start { width: 50px; margin-right: 2px; display: flex; justify-content: center; }
.start svg { width: 28px; height: 26px; }
.apps { display: flex; gap: 3px; }

.app {
  width: 59px;
  height: 39px;
  display: flex;
  align-items: center;
  justify-content: center;
  border: 1px solid transparent;
}

.app svg { width: 32px; height: 32px; }
.app-open { background: rgba(215, 185, 150, .4); border-color: rgba(240, 222, 185, .6); outline: 1px solid rgba(110, 75, 20, .3); }
.app-focus { padding-right: 4px; background: rgba(230, 222, 210, .55); border: 2px solid #eee8dc; border-right: 4px double #eee8dc; }

.tray { margin-left: auto; padding-right: 15px; display: flex; align-items: center; gap: 9px; color: #fff; }
.tray-item svg { width: 16px; height: 16px; }
.tray-item .keyboard { width: 32px; height: 20px; }
.tray-item .caret { width: 9px; height: 6px; margin: 0 3px 0 5px; }
.clock { margin-left: 4px; display: flex; flex-direction: column; align-items: center; line-height: 17px; }
```
